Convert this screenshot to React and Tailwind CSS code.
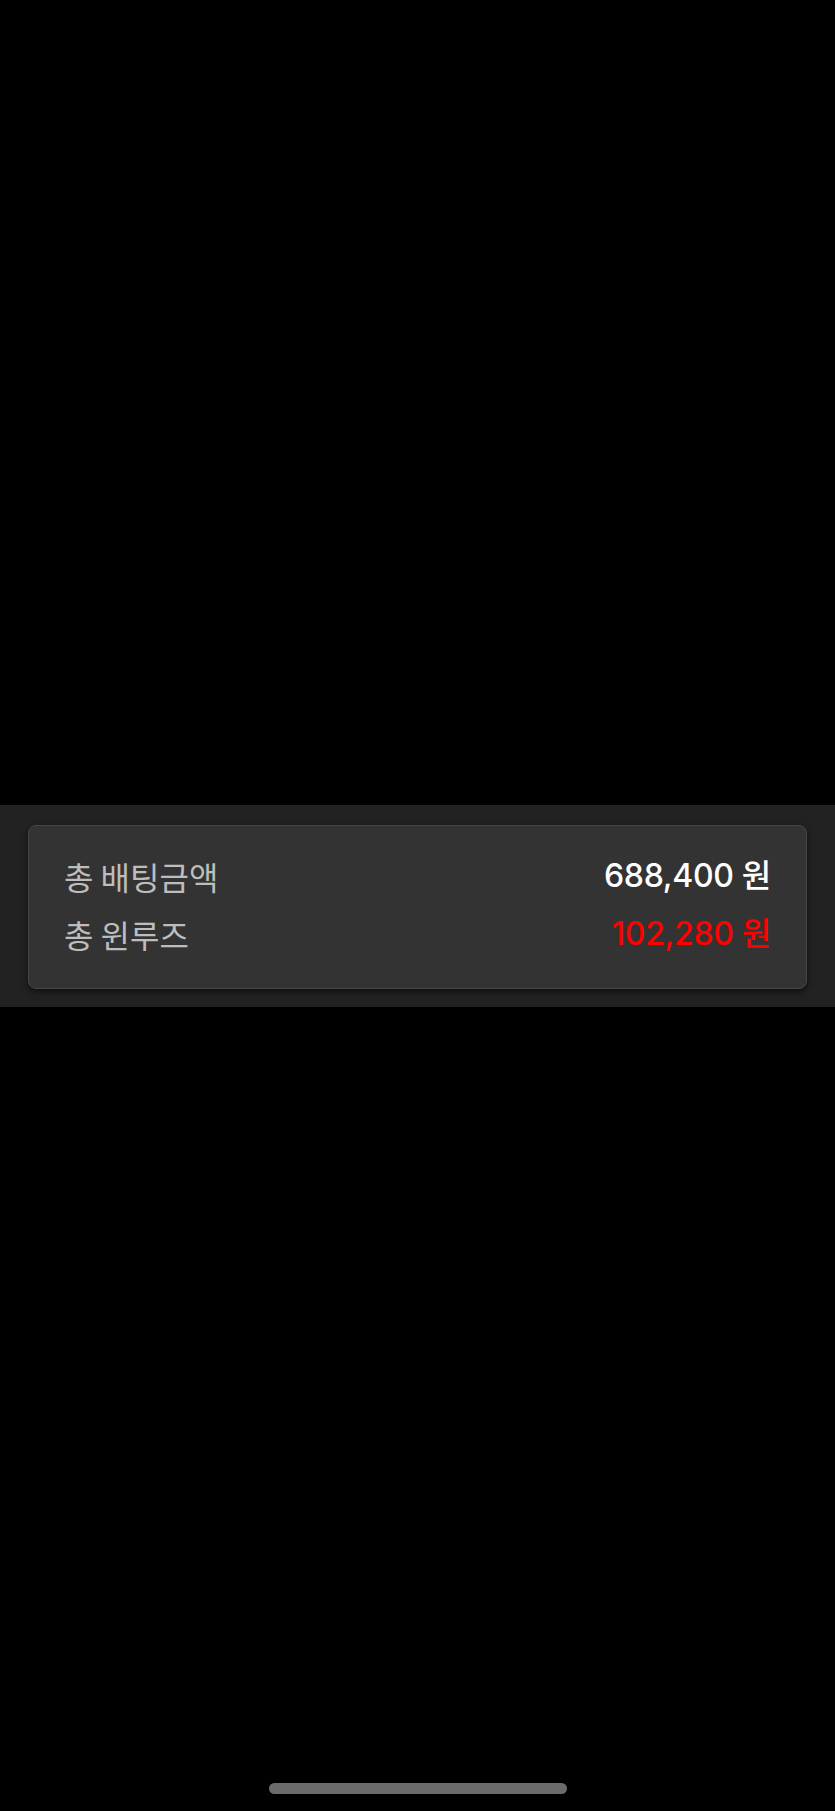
const rows = [
  { label: '총 배팅금액', value: '688,400 원', tone: 'text-white' },
  { label: '총 윈루즈', value: '102,280 원', tone: 'text-[#ff0000]' },
];

export default function App() {
  return (
    <div className="flex flex-col h-[1811px] bg-black font-['Inter','Noto_Sans_CJK_KR',sans-serif]">
      <div className="h-[805px] shrink-0" />

      <div className="bg-[#222222] pt-5 pb-[18px] px-7">
        <div className="bg-[#333333] border border-[#464646] rounded-lg shadow-[0_3px_6px_rgba(0,0,0,0.55)] px-[35px] pt-[30px] pb-[34px] flex flex-col gap-[18px]">
          {rows.map((row) => (
            <div key={row.label} className="flex items-center justify-between h-10">
              <span className="text-[32px] text-[#bdbdbd] font-['Noto_Sans_CJK_KR',sans-serif]">
                {row.label}
              </span>
              <span className={`text-[32px] font-medium tracking-[-0.3px] ${row.tone}`}>
                {row.value}
              </span>
            </div>
          ))}
        </div>
      </div>

      <div className="flex-1 flex flex-col justify-end items-center pb-[17px]">
        <div className="w-[298px] h-[11px] rounded-full bg-[#6b6b6b]" />
      </div>
    </div>
  );
}
